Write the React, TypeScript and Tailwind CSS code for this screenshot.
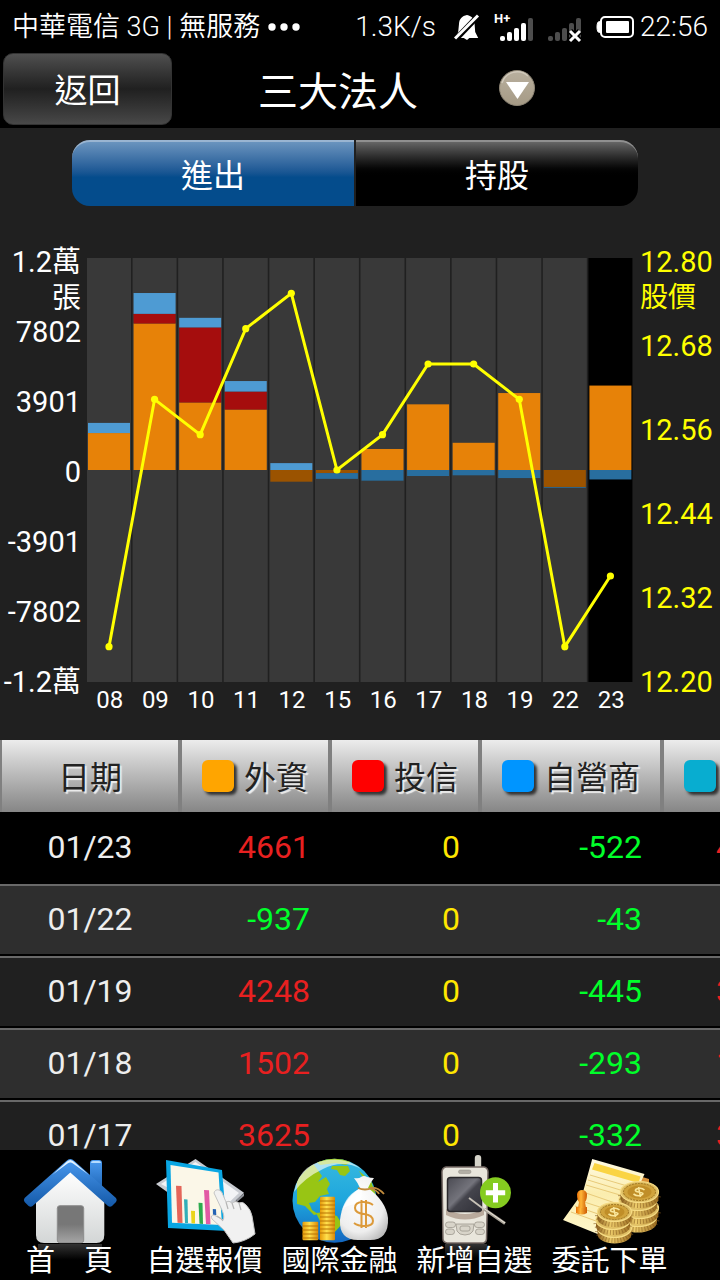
/**
 * 三大法人 — institutional buy/sell screen.
 * Stacked volume bars and the price line share one plot; the table below
 * lists the same days, newest first.
 */
import { useState } from 'react';
import type { ComponentType } from 'react';

interface Day {
  day: string;
  foreign: number;
  trust: number;
  dealer: number;
  price: number;
}

const DAYS: Day[] = [
  { day: '08', foreign: 2040, trust: 0, dealer: 560, price: 12.25 },
  { day: '09', foreign: 8090, trust: 530, dealer: 1150, price: 12.6 },
  { day: '10', foreign: 3730, trust: 4140, dealer: 530, price: 12.55 },
  { day: '11', foreign: 3340, trust: 990, dealer: 580, price: 12.7 },
  { day: '12', foreign: -645, trust: 0, dealer: 380, price: 12.75 },
  { day: '15', foreign: -170, trust: 0, dealer: -320, price: 12.5 },
  { day: '16', foreign: 1160, trust: 0, dealer: -590, price: 12.55 },
  { day: '17', foreign: 3625, trust: 0, dealer: -332, price: 12.65 },
  { day: '18', foreign: 1502, trust: 0, dealer: -293, price: 12.65 },
  { day: '19', foreign: 4248, trust: 0, dealer: -445, price: 12.6 },
  { day: '22', foreign: -937, trust: 0, dealer: -43, price: 12.25 },
  { day: '23', foreign: 4661, trust: 0, dealer: -522, price: 12.35 },
];

const ROWS = DAYS.slice(-5).reverse();
const VOLUME_LABELS = ['1.2萬', '7802', '3901', '0', '-3901', '-7802', '-1.2萬'];
const PRICE_LABELS = ['12.80', '12.68', '12.56', '12.44', '12.32', '12.20'];

/* Plot geometry, in viewBox units */
const W = 547;
const H = 424;
const STEP = W / 12;
const MAX_VOLUME = 11703;

const SERIES = [
  { key: 'foreign', up: '#e78208', down: '#9b5300' },
  { key: 'trust', up: '#a50d0d', down: '#6d0808' },
  { key: 'dealer', up: '#4e9bd3', down: '#286e9f' },
] as const;

const priceY = (p: number) => ((12.8 - p) / 0.6) * H;

function stack(d: Day) {
  let up = H / 2;
  let down = H / 2;
  return SERIES.map((s) => {
    const v = d[s.key];
    const h = (Math.abs(v) / MAX_VOLUME) * (H / 2);
    if (v >= 0) {
      up -= h;
      return { key: s.key, y: up, h, fill: s.up };
    }
    down += h;
    return { key: s.key, y: down - h, h, fill: s.down };
  });
}

function StatusBar() {
  return (
    <div className="flex h-[50px] shrink-0 items-center justify-between px-3 pt-1 text-[28px] leading-none font-light">
      <div className="flex items-center gap-2">
        <span className="text-[27px] font-[350] whitespace-nowrap">中華電信 3G | 無服務</span>
        <svg className="h-2 w-8" viewBox="0 0 32 8" fill="#fff" aria-hidden="true">
          <circle cx="4" cy="4" r="3.7" />
          <circle cx="16" cy="4" r="3.7" />
          <circle cx="28" cy="4" r="3.7" />
        </svg>
      </div>
      <div className="flex items-center gap-3.5">
        <span className="mr-1">1.3K/s</span>
        <svg className="h-7 w-[26px]" viewBox="0 0 26 28" aria-hidden="true">
          <path d="M13 2c-5 .8-7.800 4-8 9l-.8 8-3 6h23l-3-6-.6-8c-.2-5-2.500-8-7.600-9z" fill="#fff" />
          <path d="M9 24.500h7l-3 2.500z" fill="#fff" />
          <path d="M0 24 22 1l4 4L4 28z" fill="#000" />
          <path d="M1 25.500 24 2.500" stroke="#fff" strokeWidth="3" />
        </svg>
        <svg className="h-8 w-10" viewBox="0 0 40 32" fill="#fff" aria-hidden="true">
          <text x="0" y="12" fontSize="13" fontWeight="700">H+</text>
          <rect x="6" y="25" width="5" height="5" rx="2" />
          <rect x="13" y="21" width="5" height="9" rx="2" />
          <rect x="20" y="17" width="5" height="13" rx="2" />
          <rect x="27" y="12" width="5" height="18" rx="2" />
          <rect x="34" y="7" width="5" height="23" rx="2" fill="#4d4d4d" />
        </svg>
        <svg className="h-8 w-[34px]" viewBox="0 0 34 32" fill="#4d4d4d" aria-hidden="true">
          <rect x="0" y="25" width="5" height="5" rx="2" />
          <rect x="7" y="21" width="5" height="9" rx="2" />
          <rect x="14" y="17" width="5" height="13" rx="2" />
          <rect x="21" y="12" width="5" height="18" rx="2" />
          <rect x="28" y="7" width="5" height="23" rx="2" />
          <path d="m22 20 10 10m0-10L22 30" stroke="#000" strokeWidth="6" />
          <path d="m22 20 10 10m0-10L22 30" stroke="#fff" strokeWidth="3" />
        </svg>
        <div className="flex items-center gap-1.5">
          <svg className="h-[22px] w-[38px]" viewBox="0 0 38 22" aria-hidden="true">
            <path d="M5 5.500H3.500Q1 5.500 1 11t2.500 5.500H5z" fill="#fff" stroke="#fff" />
            <rect x="5" y="1" width="32" height="20" rx="4" fill="none" stroke="#fff" strokeWidth="2" />
            <rect x="10" y="5" width="23" height="12" rx="1" fill="#fff" />
          </svg>
          <span>22:56</span>
        </div>
      </div>
    </div>
  );
}

function Header() {
  return (
    <header className="flex h-[78px] shrink-0 items-center px-[3px]">
      <button className="h-[72px] w-[169px] rounded-[10px] border border-[#333] bg-linear-to-b from-[#505050] via-[#202020] to-[#484848] pt-1 text-[33px]">
        返回
      </button>
      <h1 className="ml-[86px] pt-2 text-[40px] leading-none">三大法人</h1>
      <button className="ml-20" aria-label="選擇">
        <svg className="size-[38px]" viewBox="0 0 38 38">
          <defs>
            <linearGradient id="knob" x1="0" y1="0" x2="0" y2="1">
              <stop offset="0" stopColor="#b9b09f" />
              <stop offset="1" stopColor="#a59a85" />
            </linearGradient>
          </defs>
          <circle cx="19" cy="18" r="17.500" fill="url(#knob)" stroke="#8d8575" />
          <path d="M4 13a16 16 0 0 1 26-7" fill="none" stroke="#d0c9bb" strokeWidth="1.500" />
          <path d="M8 12h23L19.500 29z" fill="#fff" />
        </svg>
      </button>
    </header>
  );
}

function Tabs() {
  const [active, setActive] = useState(0);
  const blue = 'border-[#9ab5d1] bg-linear-to-b from-[#6a94be] to-[#044c8c] to-55%';
  const black = 'border-[#909090] bg-linear-to-b from-[#666] to-black to-55%';
  return (
    <div className="mt-3 mr-[82px] ml-[72px] flex h-[66px] shrink-0 gap-0.5 text-[32px] [text-shadow:1px_2px_2px_#0008]">
      <button onClick={() => setActive(0)} className={`flex-1 rounded-l-[18px] border-t-2 pt-1 ${active === 0 ? blue : black}`}>進出</button>
      <button onClick={() => setActive(1)} className={`flex-1 rounded-r-[18px] border-t-2 pt-1 ${active === 1 ? blue : black}`}>持股</button>
    </div>
  );
}

function Chart() {
  const x = (i: number) => STEP * i + 22;
  return (
    <section className="mt-[38px] flex h-[496px] shrink-0 text-[29px] leading-[36px]">
      <div className="w-[87px] shrink-0 pr-1.5 text-right whitespace-nowrap">
        {VOLUME_LABELS.map((label, i) => (
          <div key={label} className="h-[70px]">
            {label}
            {i === 0 && <div>張</div>}
          </div>
        ))}
      </div>
      <div className="min-w-0 flex-1 pt-3.5">
        <svg className="h-[424px] w-full" viewBox={`0 0 ${W} ${H}`} preserveAspectRatio="none" role="img" aria-label="進出">
          {DAYS.map((d, i) => (
            <g key={d.day}>
              <rect x={STEP * i} y="0" width="44" height={H} fill={i === DAYS.length - 1 ? '#000' : '#393939'} />
              {stack(d).map((b) => (
                <rect key={b.key} x={STEP * i + 1} y={b.y} width="42" height={b.h} fill={b.fill} />
              ))}
            </g>
          ))}
          <polyline points={DAYS.map((d, i) => `${x(i)},${priceY(d.price)}`).join(' ')} fill="none" stroke="#ff0" strokeWidth="3" />
          {DAYS.map((d, i) => (
            <circle key={d.day} cx={x(i)} cy={priceY(d.price)} r="3.600" fill="#ff0" />
          ))}
        </svg>
        <div className="flex text-center text-2xl leading-9">
          {DAYS.map((d) => <span key={d.day} className="flex-1">{d.day}</span>)}
        </div>
      </div>
      <div className="w-[86px] shrink-0 pl-1.5 whitespace-nowrap text-[#ff0]">
        {PRICE_LABELS.map((label, i) => (
          <div key={label} className="h-[84px] last:h-[70px]">
            {label}
            {i === 0 && <div className="text-[28px]">股價</div>}
          </div>
        ))}
      </div>
    </section>
  );
}

const COLUMNS = [
  { label: '外資', swatch: 'bg-[#ffa500]', width: 'w-[150px]' },
  { label: '投信', swatch: 'bg-[#ff0000]', width: 'w-[150px]' },
  { label: '自營商', swatch: 'bg-[#0095ff]', width: 'w-[182px]' },
  { label: '合計', swatch: 'bg-[#08add0]', width: 'w-[146px]' },
];

const tone = (v: number) => (v > 0 ? 'text-[#e82020]' : v < 0 ? 'text-[#00ff2a]' : 'text-[#ffe600]');

function DayTable() {
  return (
    <div className="min-h-0 flex-1 overflow-auto [scrollbar-width:none]">
      <table className="w-[808px] min-w-full table-fixed border-separate border-spacing-0 text-[32px]">
        <thead>
          <tr className="h-[72px] text-[#222] [text-shadow:2px_2px_1px_#eee]">
            <th className="w-[180px] border-x-2 border-[#808080] bg-linear-to-b from-[#ececec] to-[#868686] px-0 pt-1 pb-0 font-normal">日期</th>
            {COLUMNS.map((c) => (
              <th key={c.label} className={`${c.width} border-x-2 border-[#808080] bg-linear-to-b from-[#ececec] to-[#868686] p-0 font-normal`}>
                <span className="flex items-center gap-2.5 pl-5 whitespace-nowrap">
                  <i className={`size-8 shrink-0 rounded-md shadow-[3px_3px_3px_#333] ${c.swatch}`} />
                  <span className="pt-1">{c.label}</span>
                </span>
              </th>
            ))}
          </tr>
        </thead>
        <tbody>
          {ROWS.map((r, i) => (
            <tr
              key={r.day}
              className={`h-[72px] *:border-t-2 *:border-b-2 *:border-b-black *:pb-0.5 ${i === 0 ? 'bg-black *:border-t-black' : i % 2 ? 'bg-[#2e2e2e] *:border-t-[#696969]' : 'bg-[#202020] *:border-t-[#696969]'}`}
            >
              <td className="text-center text-[#eee]">01/{r.day}</td>
              {[r.foreign, r.trust, r.dealer, r.foreign + r.trust + r.dealer].map((v, c) => (
                <td key={c} className={`pr-5 text-right ${tone(v)}`}>{v}</td>
              ))}
            </tr>
          ))}
        </tbody>
      </table>
    </div>
  );
}

const iconProps = { className: 'h-[92px] w-24 overflow-visible', viewBox: '0 0 96 92', 'aria-hidden': true } as const;

function HomeIcon() {
  return (
    <svg {...iconProps}>
      <defs>
        <linearGradient id="roof" x1="0" y1="0" x2="0" y2="1">
          <stop offset="0" stopColor="#4a9af0" />
          <stop offset="1" stopColor="#1459a8" />
        </linearGradient>
        <linearGradient id="wall" x1="0" y1="0" x2="0" y2="1">
          <stop offset="0" stopColor="#fff" />
          <stop offset="1" stopColor="#d3d6d6" />
        </linearGradient>
        <linearGradient id="door" x1="0" y1="0" x2="0" y2="1">
          <stop offset=".5" stopColor="#777" />
          <stop offset="1" stopColor="#a5a5a5" />
        </linearGradient>
        <linearGradient id="mirror" x1="0" y1="0" x2="0" y2="1">
          <stop offset="0" stopColor="#333" />
          <stop offset="1" stopColor="#000" />
        </linearGradient>
      </defs>
      <path d="M16 92h64v16H16z" fill="url(#mirror)" />
      <path d="M68 35V11q0-3 3-3h6q3 0 3 3v34z" fill="url(#roof)" />
      <path d="M69 11q0-2 2-2h6q2 0 2 2z" fill="#b5dcff" />
      <path d="M48.300 19 82.300 48v35q0 8-8 8H22q-8 0-8-8V48z" fill="url(#wall)" />
      <rect x="35.300" y="53.700" width="26.400" height="37" rx="2.500" fill="url(#door)" stroke="#8d8d8d" />
      <path d="M48.300 7q2 0 4 2L94 46q1.500 2 0 4l-4 4q-2 1.500-4 0L48.300 20.500 10.600 54q-2 1.500-4 0l-4-4q-1.500-2 0-4L44.300 9q2-2 4-2z" fill="url(#roof)" />
      <path d="M30 23 45 9.500q3.300-3 6.600 0L67 23 51 11.500q-2.700-1.800-5.400 0z" fill="#e3f3ff" />
    </svg>
  );
}

function QuoteIcon() {
  return (
    <svg {...iconProps}>
      <path d="M38.500 7 87 40.700 55 72-1 32z" fill="#c9ccd2" />
      <path d="M38.500 10 82 41 60 62 4 32z" fill="#f3f4f6" />
      <path d="M79 48 87 41v3l-7 6z" fill="#8b8e95" />
      <path d="M9 8 65 18l5 61-59-3z" fill="#09a6e3" />
      <path d="m13.500 13 48 7.500L65 73l-50-2.300z" fill="#fbf7e8" />
      <path d="m19 33.700 5.500.4 1 37-5-.3z" fill="#e4665a" />
      <path d="m27 47.300 3.500.3.500 23.400-3-.1z" fill="#31aeb8" />
      <path d="m34 58.700 4 .3v12.500l-3.500-.2z" fill="#e9d41a" />
      <path d="m41.500 50.700 4 .3.500 21-3.500-.3z" fill="#2dab4e" />
      <path d="m47 38 5 .3 1.500 34-4.500-.3z" fill="#e259a5" />
      <path d="m55.800 57 3.200.2.300 6-3.300-.2z" fill="#2563b5" />
      <path
        d="M57 41q1-4 5-3 3 1 4 5l3 7q3-2 6 1 4-3 7 0 4-2 7 2 5 5 6 11l3 18q-10 8-22 9l-9-13-12-11q-2-4 2-4l9 5q2-3-1-10z"
        fill="#f1f1f1"
        stroke="#c4c4c4"
      />
      <path d="m69 50 2 7m4-6 2 6m5-6 2 7M60 64q4 2 6 5" fill="none" stroke="#b5b5b5" strokeWidth="1.200" />
    </svg>
  );
}

function FinanceIcon() {
  return (
    <svg {...iconProps}>
      <defs>
        <linearGradient id="sea" x1="0" y1="0" x2="0" y2="1">
          <stop offset="0" stopColor="#37b9df" />
          <stop offset=".5" stopColor="#1ea6dd" />
          <stop offset="1" stopColor="#1366c0" />
        </linearGradient>
        <linearGradient id="coin" x1="0" y1="0" x2="1" y2="0">
          <stop offset="0" stopColor="#e79a08" />
          <stop offset=".45" stopColor="#ffe14e" />
          <stop offset="1" stopColor="#d98807" />
        </linearGradient>
        <radialGradient id="bag" cx=".4" cy=".35" r=".75">
          <stop offset="0" stopColor="#fff" />
          <stop offset=".7" stopColor="#eee" />
          <stop offset="1" stopColor="#bbb" />
        </radialGradient>
        <clipPath id="globe"><circle cx="42.500" cy="48.700" r="42" /></clipPath>
      </defs>
      <circle cx="42.500" cy="48.700" r="42" fill="url(#sea)" />
      <g clipPath="url(#globe)" fill="#98c514">
        <path d="M5 52V28L20 10l10 14-4 6 8-5 4 7-3 5 2 5-9 2-5 6-6 1 3 7 6 4-4 1-9-9z" />
        <path d="m22 8 20-3 18 4-6 4-10-2-16 2zM40 14h16l2 5-5 5-5-1-3-5-6-1z" />
        <path d="m24 61 9-1 12 4 5 8-8 9-4 7-6-1-2-14z" />
        <path d="m67 19 12 10 7 20-8-3-7-4-4-10 4-6z" />
      </g>
      <path d="M2 40Q8 8 43 7.500q15 0 27 10Q51 7 31 17 12 26 2 40z" fill="#fff" opacity=".6" />
      <rect x="28" y="44.700" width="15" height="43.500" rx="1" fill="url(#coin)" />
      <rect x="10.500" y="69.700" width="15.700" height="18.500" rx="1" fill="url(#coin)" />
      <path d="M28 49h15m-15 4h15m-15 4h15m-15 4h15m-15 4h15m-15 4h15m-15 4h15m-15 4h15m-15 4h15M10.500 74h15.700m-15.700 4h15.700m-15.700 4h15.700m-15.700 4h15.700" stroke="#b87305" strokeWidth="1" />
      <path d="M62 26q5 1 7-1 3-2 6 0 4 1 7 1-4 5-6 10 18 13 20 30 1 22-18 22H66q-19 0-18-20 2-20 20-32-2-5-6-10z" fill="url(#bag)" />
      <path d="M49 61q5-20 21-25 2 14-11 17-8 1-10 8z" fill="#fff" opacity=".7" />
      <path d="M66 36q7 3 14 0m-2 0q7-2 14 6m-14-6q8 3 9 6" fill="none" stroke="#c18b3c" strokeWidth="1.800" />
      <path d="M81 53q-4-3-10-3-8 0-8 6 0 5 9 6 9 1 9 7 0 5-9 5-6 0-10-3M69.500 48v28m4.500-28v28" fill="none" stroke="#dc9a3a" strokeWidth="2" />
    </svg>
  );
}

function PhoneIcon() {
  return (
    <svg {...iconProps}>
      <defs>
        <linearGradient id="screen" x1="0" y1="0" x2="1" y2="1">
          <stop offset="0" stopColor="#4a4a52" />
          <stop offset=".45" stopColor="#74747c" />
          <stop offset=".55" stopColor="#44444c" />
          <stop offset="1" stopColor="#303038" />
        </linearGradient>
      </defs>
      <path d="M18 92h42v14H18z" fill="url(#mirror)" />
      <rect x="47.800" y="3" width="6.400" height="16" rx="3" fill="#d5d3c9" />
      <path d="M19 15h38q4 1 4 5l-1.500 67q0 3-3 4H20q-4-1-4-4l-1-67q0-4 4-5z" fill="#e9e6dc" stroke="#776b66" strokeWidth="1.500" />
      <path d="M19 57q19 10 38 0v6q-19 9-38 0z" fill="#b9aa9c" />
      <rect x="31.500" y="18" width="12.500" height="3.600" rx="1.800" fill="#b3afa5" stroke="#8f8b82" strokeWidth=".5" />
      <rect x="20.500" y="25.500" width="34" height="34" rx="3" fill="url(#screen)" stroke="#2a282b" strokeWidth="1.500" />
      <g fill="#d8d4c9" stroke="#9d988e" strokeWidth=".8">
        <rect x="18.500" y="70" width="10" height="5.500" rx="2.700" />
        <rect x="18.500" y="77" width="9" height="5.500" rx="2.700" />
        <rect x="47.500" y="70" width="10" height="5.500" rx="2.700" />
        <rect x="48.500" y="77" width="9" height="5.500" rx="2.700" />
        <path d="M29 72h18l-1 7q-2 4-8 4t-8-4z" />
        <rect x="33" y="74" width="10" height="5" rx="2" />
      </g>
      <path d="m42 46 16 12" stroke="#c8c2b8" strokeWidth="1.800" />
      <path d="m57 57 21 14.500" stroke="#aaa499" strokeWidth="3" />
      <path d="m57 56.500 21 14.500" stroke="#eae5da" strokeWidth="1" />
      <circle cx="68.500" cy="40.700" r="15.500" fill="#85cc20" />
      <path d="M68.500 31v19.400M58.800 40.700h19.400" stroke="#fff" strokeWidth="5" />
    </svg>
  );
}

function CoinStack({ cx, top, rx, layers }: { cx: number; top: number; rx: number; layers: number }) {
  const ry = rx / 2 + 1;
  return (
    <g>
      {Array.from({ length: layers }, (_, n) => layers - 1 - n).map((n) => {
        const x = cx + (n % 2 ? -1.5 : 0);
        const y = top + n * 8;
        return (
          <g key={n}>
            <path d={`M${x - rx} ${y}v6a${rx} ${ry} 0 0 0 ${rx * 2} 0v-6z`} fill="url(#gold)" />
            <path d={`M${x - rx} ${y + 3}a${rx} ${ry} 0 0 0 ${rx * 2} 0`} fill="none" stroke="#80551b" strokeWidth="5" strokeDasharray="1 2" opacity=".5" />
            <ellipse cx={x} cy={y} rx={rx} ry={ry} fill="#dfbf65" stroke="#f6dc85" strokeWidth="1.200" />
          </g>
        );
      })}
      <ellipse cx={cx} cy={top} rx={rx - 3} ry={ry - 2} fill="#d0a33c" stroke="#9d741f" strokeDasharray="2 1" />
      <ellipse cx={cx} cy={top} rx={rx - 7} ry={ry - 4} fill="#c08e28" />
      <path d={`M${cx + 5} ${top - 2}q-3-3-8-1-3 2 2 3 7 1 3 3-4 2-8-1M${cx - 1} ${top - 5}l2 10`} fill="none" stroke="#f9e69b" strokeWidth="1.600" />
    </g>
  );
}

function OrderIcon() {
  return (
    <svg {...iconProps}>
      <defs>
        <linearGradient id="gold" x1="0" y1="0" x2="1" y2="0">
          <stop offset="0" stopColor="#8c6020" />
          <stop offset=".4" stopColor="#efce6c" />
          <stop offset="1" stopColor="#9b6c20" />
        </linearGradient>
        <linearGradient id="paper" x1="0" y1="0" x2="0" y2="1">
          <stop offset="0" stopColor="#fffbe4" />
          <stop offset=".45" stopColor="#fbedae" />
          <stop offset="1" stopColor="#fff8cd" />
        </linearGradient>
        <linearGradient id="stamp" x1="0" y1="0" x2="1" y2="0">
          <stop offset="0" stopColor="#e96f05" />
          <stop offset=".4" stopColor="#ffb638" />
          <stop offset="1" stopColor="#cc5903" />
        </linearGradient>
      </defs>
      <path d="m77 24 10 3v8H75z" fill="#d99038" />
      <path d="m30.200 7 52.300 15-20 45-22 17L1 68l20-28z" fill="url(#paper)" />
      <path d="m32.500 11 46 13.500-2 6.500L30 17.500z" fill="#fad443" />
      <path d="m28 23 44 13M26 28l42 13M24 33l34 10M21 40l38 13M16 48l28 9m-31-3 26 9m-30-3 25 9" stroke="#e8ca79" strokeWidth="1" />
      <path d="M14 55h11v6q-5 3-11 0z" fill="url(#stamp)" />
      <path d="M15 42q1-4 5-4t5 4q0 6-2 8l1 6h-8l1-6q-2-2-2-8z" fill="url(#stamp)" />
      <CoinStack cx={77.500} top={40} rx={19} layers={4} />
      <CoinStack cx={52.500} top={60} rx={17} layers={3} />
    </svg>
  );
}

const NAV: { label: string; Icon: ComponentType }[] = [
  { label: '首　頁', Icon: HomeIcon },
  { label: '自選報價', Icon: QuoteIcon },
  { label: '國際金融', Icon: FinanceIcon },
  { label: '新增自選', Icon: PhoneIcon },
  { label: '委託下單', Icon: OrderIcon },
];

function BottomNav() {
  return (
    <nav className="flex h-[130px] shrink-0 bg-black pt-0.5 pr-[43px] pl-0.5">
      {NAV.map(({ label, Icon }) => (
        <a key={label} href="#" className="flex min-w-0 flex-1 flex-col items-center">
          <Icon />
          <span className="relative text-[29px] leading-[34px] whitespace-nowrap">{label}</span>
        </a>
      ))}
    </nav>
  );
}

export default function App() {
  return (
    <div className="flex h-screen flex-col overflow-hidden bg-[#202020] font-[Roboto,'Noto_Sans_CJK_TC',sans-serif] text-white">
      <div className="shrink-0 bg-black">
        <StatusBar />
        <Header />
      </div>
      <Tabs />
      <Chart />
      <DayTable />
      <BottomNav />
    </div>
  );
}
